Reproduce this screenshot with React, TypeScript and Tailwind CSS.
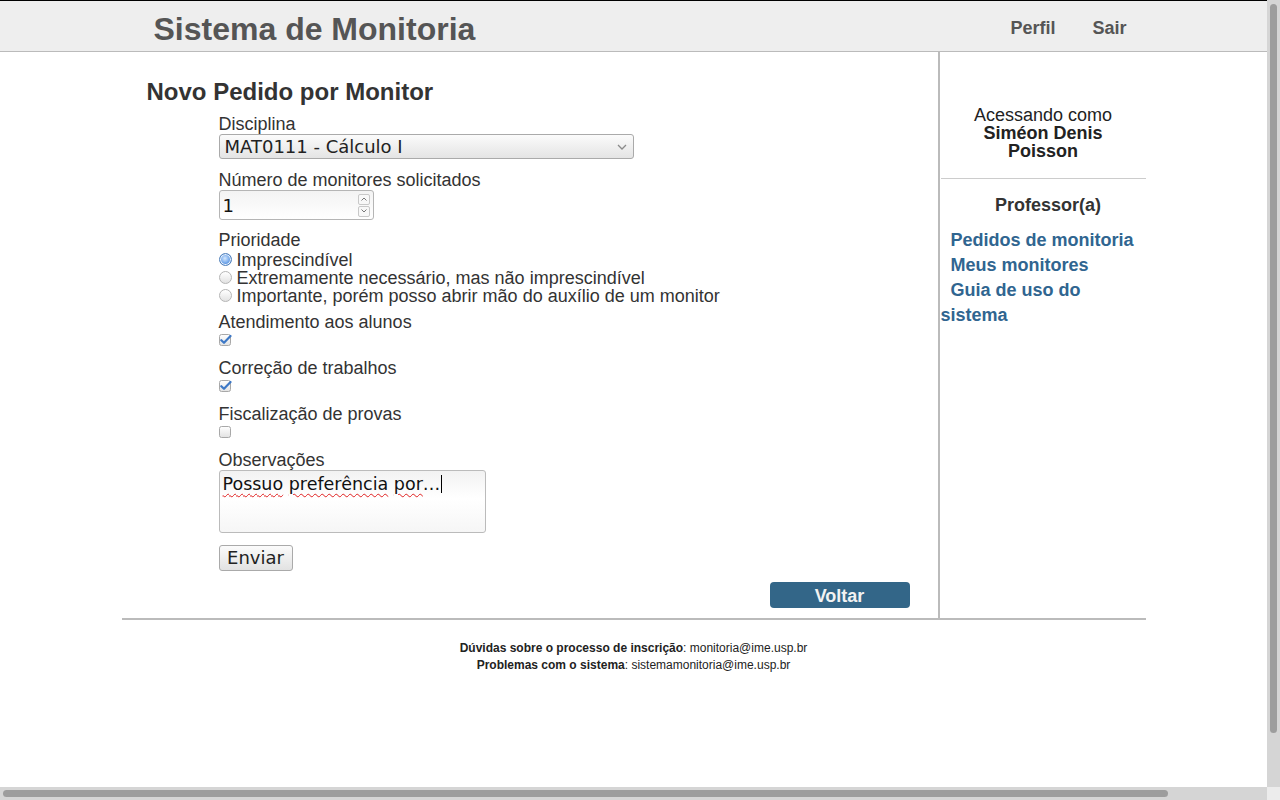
import React from "react"

const labelCls = "block text-[18px] leading-[20px] text-[#333]"
const inputFont = "font-['DejaVu_Sans',Verdana,sans-serif]"

function Radio({ checked }: { checked?: boolean }) {
  return checked ? (
    <span className="inline-block w-[13px] h-[13px] rounded-full border border-[#4f7fba] bg-[radial-gradient(circle_at_45%_40%,#d6e8fd_0%,#7fb0ee_45%,#3f7bd0_80%)] shadow-[inset_0_0_0_1px_#e8f1fc]" />
  ) : (
    <span className="inline-block w-[13px] h-[13px] rounded-full border border-[#b5b5b5] bg-[linear-gradient(#ffffff,#e2e2e2)]" />
  )
}

function Check({ checked }: { checked?: boolean }) {
  return (
    <svg width="13" height="12" viewBox="0 0 13 12" className="block">
      <defs>
        <linearGradient id="cbg" x1="0" y1="0" x2="0" y2="1">
          <stop offset="0" stopColor="#ffffff" />
          <stop offset="1" stopColor="#e2e2e2" />
        </linearGradient>
      </defs>
      <rect x="0.5" y="0.5" width="11" height="11" rx="2" fill="url(#cbg)" stroke="#a8a8a8" />
      {checked && (
        <path
          d="M2.3 6.2 L5 8.8 L11.5 2"
          fill="none"
          stroke="#3d78c6"
          strokeWidth="2.2"
          strokeLinecap="round"
          strokeLinejoin="round"
        />
      )}
    </svg>
  )
}

export default function App() {
  const links = ["Pedidos de monitoria", "Meus monitores", "Guia de uso do sistema"]

  return (
    <div className="w-[1267px] min-h-[787px] bg-white font-['Liberation_Sans',Arial,sans-serif] text-[#333]">
      {/* header */}
      <header className="h-[52px] border-t border-t-black border-b border-b-[#bbbbbb] bg-[#eeeeee]">
        <div className="mx-auto flex h-full w-[1024px] items-center justify-between pl-[32px] pr-[19px] pt-[5px]">
          <h1 className="text-[32px] leading-[36px] font-bold text-[#555555]">Sistema de Monitoria</h1>
          <nav className="flex gap-[37px] text-[18px] font-bold text-[#555555]">
            <a>Perfil</a>
            <a>Sair</a>
          </nav>
        </div>
      </header>

      <div className="mx-auto w-[1024px]">
        <div className="flex border-b-2 border-b-[#bbbbbb]">
          {/* main column */}
          <main className="w-[818px] border-r-2 border-r-[#bbbbbb] pt-[26px] pb-[10px]">
            <h2 className="pl-[25px] text-[24px] leading-[28px] font-bold text-[#333]">Novo Pedido por Monitor</h2>

            <form className="mt-[8px] pl-[97px]">
              <label className={labelCls}>Disciplina</label>
              <div
                className={`${inputFont} flex h-[25px] w-[415px] items-center justify-between rounded-[3px] border border-[#aaaaaa] bg-[linear-gradient(#fbfbfb,#e4e4e4)] pl-[5px] pr-[6px] text-[18px] text-[#222]`}
              >
                <span>MAT0111 - Cálculo I</span>
                <svg width="10" height="6" viewBox="0 0 10 6">
                  <path d="M1 1 L5 5 L9 1" fill="none" stroke="#8a8a8a" strokeWidth="1.3" />
                </svg>
              </div>

              <label className={`${labelCls} mt-[11px]`}>Número de monitores solicitados</label>
              <div
                className={`${inputFont} flex h-[30px] w-[155px] items-center justify-between rounded-[3px] border border-[#b5b5b5] bg-[linear-gradient(#f3f3f3,#ffffff)] pl-[3px] pr-[3px] text-[18px] text-[#111]`}
              >
                <span>1</span>
                <div className="flex flex-col gap-[1px]">
                  <span className="flex h-[11px] w-[12px] items-center justify-center rounded-[2px] border border-[#c8c8c8] bg-[#f8f8f8]">
                    <svg width="6" height="4" viewBox="0 0 6 4">
                      <path d="M0.5 3.5 L3 1 L5.5 3.5" fill="none" stroke="#777" strokeWidth="1" />
                    </svg>
                  </span>
                  <span className="flex h-[11px] w-[12px] items-center justify-center rounded-[2px] border border-[#c8c8c8] bg-[#f8f8f8]">
                    <svg width="6" height="4" viewBox="0 0 6 4">
                      <path d="M0.5 0.5 L3 3 L5.5 0.5" fill="none" stroke="#777" strokeWidth="1" />
                    </svg>
                  </span>
                </div>
              </div>

              <label className={`${labelCls} mt-[10px]`}>Prioridade</label>
              {[
                "Imprescindível",
                "Extremamente necessário, mas não imprescindível",
                "Importante, porém posso abrir mão do auxílio de um monitor",
              ].map((opt, i) => (
                <div key={opt} className="flex h-[18px] items-center gap-[5px] pt-[1px] text-[18px] leading-[18px] text-[#333]">
                  <Radio checked={i === 0} />
                  <span>{opt}</span>
                </div>
              ))}

              <label className={`${labelCls} mt-[8px]`}>Atendimento aos alunos</label>
              <div className="h-[20px] pt-[2px]">
                <Check checked />
              </div>

              <label className={`${labelCls} mt-[6px]`}>Correção de trabalhos</label>
              <div className="h-[20px] pt-[2px]">
                <Check checked />
              </div>

              <label className={`${labelCls} mt-[6px]`}>Fiscalização de provas</label>
              <div className="h-[20px] pt-[2px]">
                <Check />
              </div>

              <label className={`${labelCls} mt-[6px]`}>Observações</label>
              <div
                className={`${inputFont} h-[63px] w-[267px] rounded-[3px] border border-[#bbbbbb] bg-[linear-gradient(#f2f2f2,#ffffff_45%,#f6f6f6)] pl-[3px] pt-[2px] text-[17.5px] leading-[22px] text-[#111]`}
              >
                <span className="underline decoration-wavy decoration-[#e02020] decoration-1 underline-offset-[3px]">Possuo</span>{" "}
                <span className="underline decoration-wavy decoration-[#e02020] decoration-1 underline-offset-[3px]">preferência</span>{" "}
                <span className="underline decoration-wavy decoration-[#e02020] decoration-1 underline-offset-[3px]">por</span>…
                <span className="ml-[1px] inline-block h-[18px] w-[1px] bg-black align-[-3px]" />
              </div>

              <button
                type="button"
                className={`${inputFont} mt-[12px] h-[26px] w-[74px] rounded-[3px] border border-[#aaaaaa] bg-[linear-gradient(#fbfbfb,#e2e2e2)] text-[18px] leading-[22px] text-[#222]`}
              >
                Enviar
              </button>
            </form>

            <div className="mt-[11px] flex justify-end pr-[28px]">
              <button
                type="button"
                className="h-[26px] w-[140px] rounded-[4px] bg-[#336688] pt-[1px] text-[18px] leading-[26px] font-bold text-[#f2f2f2]"
              >
                Voltar
              </button>
            </div>
          </main>

          {/* sidebar */}
          <aside className="w-[206px] pl-[1px] pt-[54px]">
            <div className="text-center text-[18px] leading-[18px] text-[#222]">
              <div>Acessando como</div>
              <div className="px-[30px] font-bold">Siméon Denis Poisson</div>
            </div>
            <div className="mt-[18px] h-px bg-[#cccccc]" />
            <div className="mt-[14px] pl-[10px] text-center text-[18px] leading-[25px] font-bold text-[#333]">Professor(a)</div>
            <ul className="mt-[10px] text-[18px] leading-[25px] font-bold text-[#306590]">
              {links.map((l) => (
                <li key={l}>
                  <a>{"\u00a0\u00a0" + l}</a>
                </li>
              ))}
            </ul>
          </aside>
        </div>

        <footer className="pt-[20px] text-center text-[12px] leading-[17px] text-[#222]">
          <p>
            <b>Dúvidas sobre o processo de inscrição</b>: monitoria@ime.usp.br
          </p>
          <p>
            <b>Problemas com o sistema</b>: sistemamonitoria@ime.usp.br
          </p>
        </footer>
      </div>

      {/* browser scrollbars */}
      <div className="fixed top-0 right-0 h-[787px] w-[13px] bg-[#d5d5d5] px-[3px] pt-[4px]">
        <div className="h-[729px] w-[7px] rounded-full bg-[#9d9d9d]" />
      </div>
      <div className="fixed bottom-0 left-0 h-[13px] w-[1267px] bg-[#d5d5d5] py-[3px] pl-[3px]">
        <div className="h-[7px] w-[1165px] rounded-full bg-[#9d9d9d]" />
      </div>
      <div className="fixed right-0 bottom-0 h-[13px] w-[13px] bg-[#ececec]" />
    </div>
  )
}
